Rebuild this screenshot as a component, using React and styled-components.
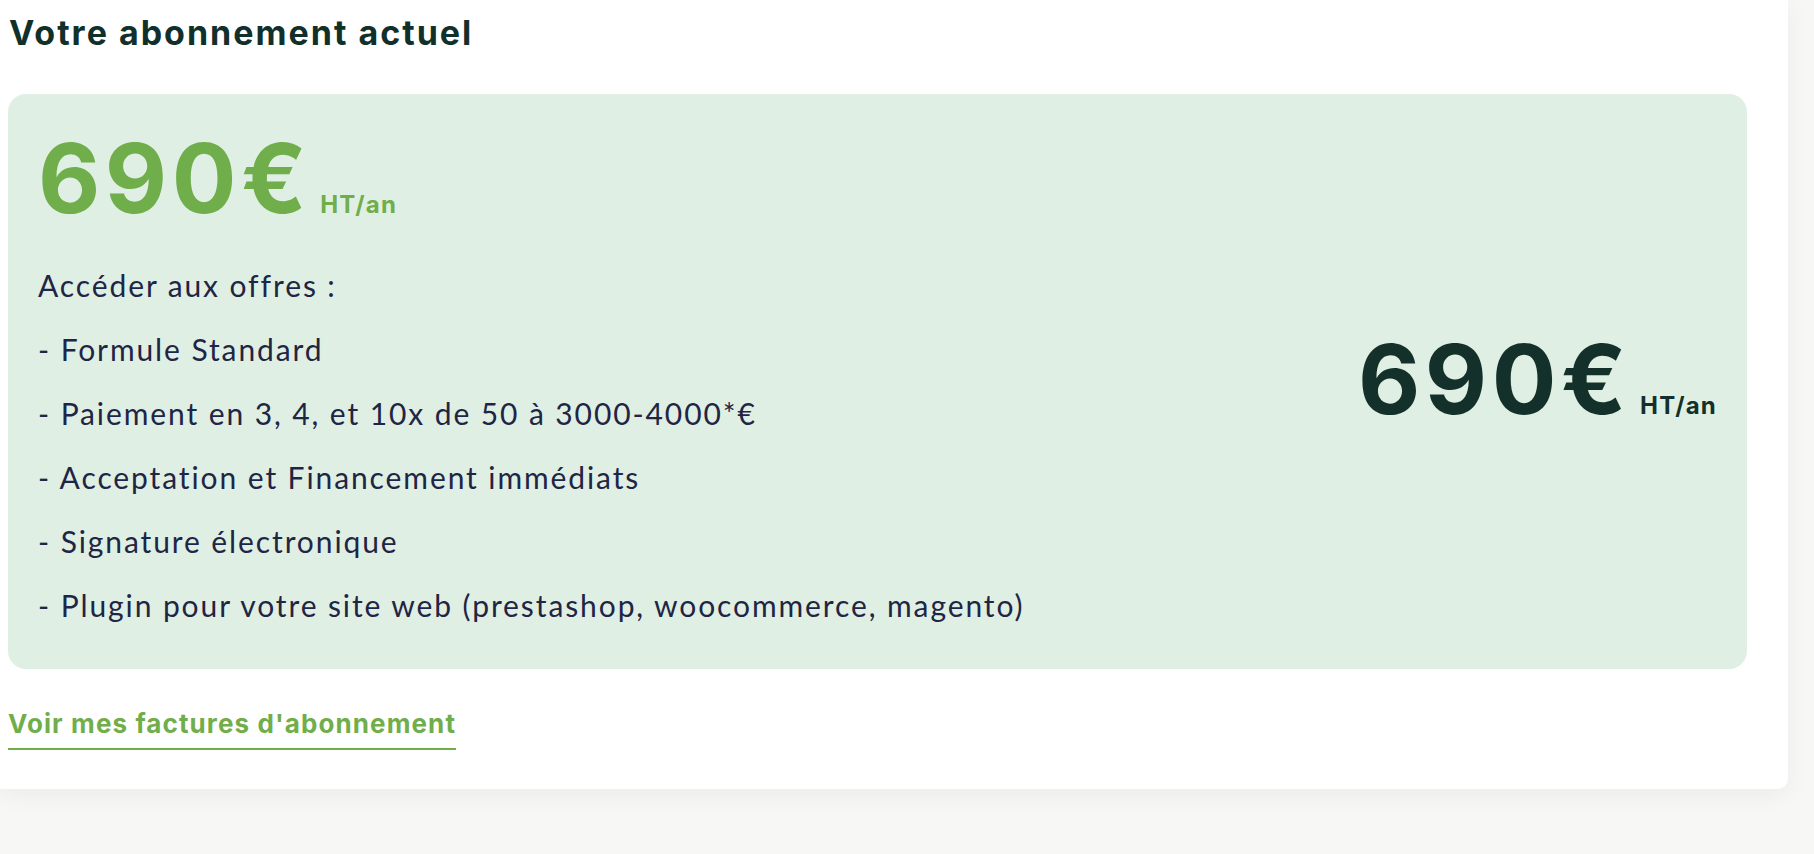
import React from "react";
import styled, { createGlobalStyle } from "styled-components";

const GlobalStyle = createGlobalStyle`
  html, body {
    margin: 0;
    padding: 0;
    background: #f7f7f5;
  }
  body {
    font-family: Inter, "Liberation Sans", sans-serif;
  }
`;

const Page = styled.div`
  width: 1814px;
  height: 854px;
  background: #f7f7f5;
  overflow: hidden;
`;

const Panel = styled.section`
  width: 1788px;
  box-sizing: border-box;
  background: #ffffff;
  border-radius: 0 0 10px 0;
  box-shadow: 0 6px 24px rgba(0, 0, 0, 0.05);
  padding: 12px 41px 39px 8px;
`;

const Title = styled.h2`
  margin: 0;
  padding-left: 1px;
  font-family: Inter, "Liberation Sans", sans-serif;
  font-weight: 700;
  font-size: 34px;
  line-height: 41px;
  letter-spacing: 2px;
  color: #12302b;
`;

const PlanCard = styled.div`
  margin-top: 41px;
  background: #e0efe3;
  border-radius: 18px;
  padding: 36px 30px 42px 30px;
  display: flex;
  align-items: center;
  justify-content: space-between;
`;

const LeftCol = styled.div`
  display: flex;
  flex-direction: column;
`;

const PriceRow = styled.div`
  display: flex;
  align-items: baseline;
  gap: 9px;
  color: ${(p) => p.$color};
`;

const PriceAmount = styled.span`
  font-family: Inter, "Liberation Sans", sans-serif;
  font-weight: 700;
  font-size: 96px;
  line-height: 96px;
  letter-spacing: 4.5px;
`;

const PriceUnit = styled.span`
  font-family: Inter, "Liberation Sans", sans-serif;
  font-weight: 700;
  font-size: 24px;
  letter-spacing: 1.2px;
`;

const Features = styled.ul`
  list-style: none;
  margin: 37px 0 0 0;
  padding: 0;
  display: flex;
  flex-direction: column;
  gap: 20px;
`;

const Feature = styled.li`
  font-family: Lato, "Noto Sans", sans-serif;
  font-weight: 400;
  font-size: 30px;
  line-height: 44px;
  letter-spacing: 1.9px;
  color: #1f2544;
`;

const InvoiceLink = styled.a`
  display: inline-block;
  margin-top: 39px;
  padding-bottom: 9px;
  border-bottom: 2px solid #6fae4b;
  font-family: Inter, "Liberation Sans", sans-serif;
  font-weight: 700;
  font-size: 26px;
  line-height: 31px;
  letter-spacing: 1.1px;
  color: #6fae4b;
  text-decoration: none;
  cursor: pointer;
`;

const features = [
  "Accéder aux offres :",
  "- Formule Standard",
  "- Paiement en 3, 4, et 10x de 50 à 3000-4000*€",
  "- Acceptation et Financement immédiats",
  "- Signature électronique",
  "- Plugin pour votre site web (prestashop, woocommerce, magento)",
];

function Price({ color }) {
  return (
    <PriceRow $color={color}>
      <PriceAmount>690€</PriceAmount>
      <PriceUnit>HT/an</PriceUnit>
    </PriceRow>
  );
}

export default function App() {
  return (
    <Page>
      <GlobalStyle />
      <Panel>
        <Title>Votre abonnement actuel</Title>
        <PlanCard>
          <LeftCol>
            <Price color="#6fae4b" />
            <Features>
              {features.map((f) => (
                <Feature key={f}>{f}</Feature>
              ))}
            </Features>
          </LeftCol>
          <Price color="#13302b" />
        </PlanCard>
        <InvoiceLink>Voir mes factures d'abonnement</InvoiceLink>
      </Panel>
    </Page>
  );
}
